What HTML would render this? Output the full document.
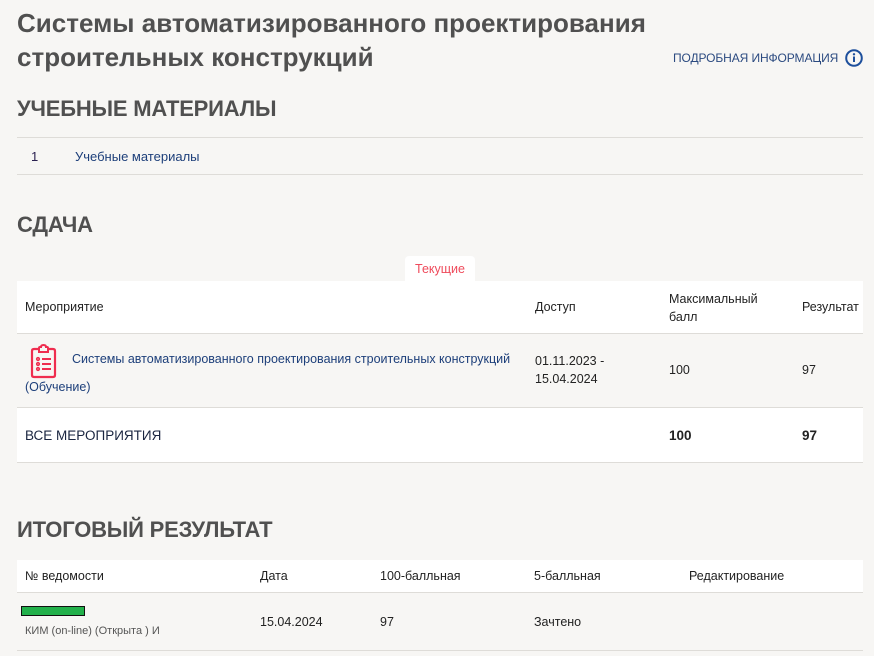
<!DOCTYPE html>
<html><head><meta charset="utf-8"><style>
*{margin:0;padding:0;box-sizing:border-box}
body{width:874px;height:656px;background:#f7f6f4;font-family:"Liberation Sans",sans-serif;color:#222;position:relative;overflow:hidden;font-size:12.5px}
.a{position:absolute;white-space:nowrap}
h1{position:absolute;left:17px;top:6px;font-size:26px;line-height:34px;color:#505050;font-weight:bold;letter-spacing:0px;width:720px}
.h2{position:absolute;left:17px;font-size:22px;font-weight:bold;color:#505050;letter-spacing:-0.2px}
.line{position:absolute;left:17px;width:846px;height:1px;background:#dedcd8}
.white{position:absolute;left:17px;width:846px;background:#fff}
.b{font-weight:bold}
.link{color:#1d3f7a}
</style></head><body>
<h1>Системы автоматизированного проектирования строительных конструкций</h1>
<div class="a" style="left:673px;top:51px;font-size:12px;color:#2b4a80;letter-spacing:-0.1px">ПОДРОБНАЯ ИНФОРМАЦИЯ</div>
<svg class="a" style="left:845px;top:49px" width="18" height="18" viewBox="0 0 18 18"><circle cx="9" cy="9" r="7.8" fill="none" stroke="#1d4f9c" stroke-width="2"/><rect x="8" y="7.5" width="2" height="5.5" fill="#1d4f9c"/><circle cx="9" cy="5.3" r="1.2" fill="#1d4f9c"/></svg>

<div class="h2" style="top:96px">УЧЕБНЫЕ МАТЕРИАЛЫ</div>
<div class="line" style="top:137px"></div>
<div class="a" style="left:31px;top:149px;font-size:13px;color:#2a2050">1</div>
<div class="a link" style="left:75px;top:149px;font-size:13px">Учебные материалы</div>
<div class="line" style="top:174px"></div>

<div class="h2" style="top:212px">СДАЧА</div>
<div class="a" style="left:405px;top:256px;width:70px;height:26px;background:#fff;border-radius:4px 4px 0 0;color:#ef4b5c;font-size:12.5px;text-align:center;line-height:26px">Текущие</div>
<div class="white" style="top:281px;height:52px"></div>
<div class="a" style="left:25px;top:300px">Мероприятие</div>
<div class="a" style="left:535px;top:300px">Доступ</div>
<div class="a" style="left:669px;top:290px;line-height:18px;white-space:normal">Максимальный<br>балл</div>
<div class="a" style="left:802px;top:300px">Результат</div>
<div class="line" style="top:333px"></div>
<svg class="a" style="left:28px;top:344px" width="32" height="36" viewBox="0 0 32 36"><path d="M11 5 H6 Q4 5 4 7 V31 Q4 33 6 33 H25 Q27 33 27 31 V7 Q27 5 25 5 H20" fill="none" stroke="#ef2d4f" stroke-width="2.2"/><path d="M11 8 V4 Q11 3 12 3 H13 Q13 1 15.5 1 Q18 1 18 3 H19 Q20 3 20 4 V8 Z" fill="none" stroke="#ef2d4f" stroke-width="2"/><g fill="none" stroke="#ef2d4f" stroke-width="1.6"><circle cx="10" cy="15" r="1.3"/><circle cx="10" cy="20" r="1.3"/><circle cx="10" cy="25" r="1.3"/></g><g stroke="#ef2d4f" stroke-width="2"><path d="M14 15 H23M14 20 H23M14 25 H23"/></g></svg>
<div class="a link" style="left:72px;top:352px">Системы автоматизированного проектирования строительных конструкций</div>
<div class="a link" style="left:25px;top:380px">(Обучение)</div>
<div class="a" style="left:535px;top:352px;line-height:18px;white-space:normal">01.11.2023 -<br>15.04.2024</div>
<div class="a" style="left:669px;top:363px">100</div>
<div class="a" style="left:802px;top:363px">97</div>
<div class="line" style="top:407px"></div>
<div class="white" style="top:408px;height:54px"></div>
<div class="a" style="left:25px;top:428px;font-size:13.5px;color:#1a2540">ВСЕ МЕРОПРИЯТИЯ</div>
<div class="a b" style="left:669px;top:428px;font-size:13.5px">100</div>
<div class="a b" style="left:802px;top:428px;font-size:13.5px">97</div>
<div class="line" style="top:462px"></div>

<div class="h2" style="top:517px">ИТОГОВЫЙ РЕЗУЛЬТАТ</div>
<div class="white" style="top:560px;height:32px"></div>
<div class="a" style="left:25px;top:569px">№ ведомости</div>
<div class="a" style="left:260px;top:569px">Дата</div>
<div class="a" style="left:380px;top:569px">100-балльная</div>
<div class="a" style="left:534px;top:569px">5-балльная</div>
<div class="a" style="left:689px;top:569px">Редактирование</div>
<div class="line" style="top:592px"></div>
<div class="a" style="left:21px;top:606px;width:64px;height:10px;background:#22b04b;border:1px solid #111"></div>
<div class="a" style="left:25px;top:625px;font-size:11px;color:#555">КИМ (on-line) (Открыта ) И</div>
<div class="a" style="left:260px;top:615px">15.04.2024</div>
<div class="a" style="left:380px;top:615px">97</div>
<div class="a" style="left:534px;top:615px">Зачтено</div>
<div class="line" style="top:650px"></div>
</body></html>
